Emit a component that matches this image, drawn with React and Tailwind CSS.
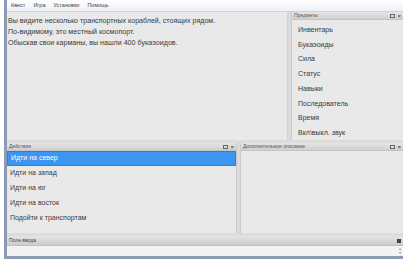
import React from "react";

function DockHeader({ title, float = true }) {
  return (
    <div className="h-[8px] flex items-center justify-between px-[2px] bg-gradient-to-b from-[#e6e6e6] to-[#d0d0d0] border-b border-[#c4c4c4] shrink-0">
      <span className="text-[5px] leading-none text-[#555]">{title}</span>
      <span className="flex items-center gap-[2px]">
        {float && <span className="w-[5px] h-[4px] border border-[#666] bg-[#ddd]" />}
        <span className="text-[6px] leading-none text-[#555] font-bold">×</span>
      </span>
    </div>
  );
}

export default function App() {
  const items = ["Инвентарь", "Букаэоиды", "Сила", "Статус", "Навыки", "Последователь", "Время", "Вкл\\выкл. звук"];
  const actions = ["Идти на запад", "Идти на юг", "Идти на восток", "Подойти к транспортам"];
  return (
    <div className="w-[403px] h-[262px] bg-white overflow-hidden" style={{ fontFamily: '"Liberation Sans", Arial, sans-serif' }}>
      <div className="ml-[4px] w-[399px] h-[259px] border-l-[3px] border-b-[3px] border-[#8a9bb3] bg-[#ececec] flex flex-col">
        <div className="h-[12px] shrink-0 bg-gradient-to-b from-[#ffffff] to-[#eef1f6] border-b border-[#c9d3e2] flex items-center gap-[8px] pl-[4px] text-[5.5px] text-[#444]">
          <span>Квест</span><span>Игра</span><span>Установки</span><span>Помощь</span>
        </div>
        <div className="h-[128px] shrink-0 flex">
          <div className="w-[281px] bg-[#e9e9e9] border-r border-[#d2d2d2] pt-[4px] pl-[1px] text-[7.1px] leading-[11px] text-[#3a3a3a]">
            <div>Вы видите несколько транспортных кораблей, стоящих рядом.</div>
            <div>По-видимому, это местный космопорт.</div>
            <div>Обыскав свои карманы, вы нашли 400 букаэоидов.</div>
          </div>
          <div className="w-[3px] bg-[#dadada]" />
          <div className="flex-1 flex flex-col bg-[#e9e9e9] border-l border-[#cbcbcb]">
            <DockHeader title="Предметы" />
            <div className="pl-[6px] pt-[3px] flex flex-col text-[7px] text-[#3a3a3a]">
              {items.map((t) => (
                <div key={t} className="h-[14.7px] flex items-center">{t}</div>
              ))}
            </div>
          </div>
        </div>
        <div className="h-[3px] shrink-0 bg-[#dcdcdc]" />
        <div className="h-[90px] shrink-0 flex">
          <div className="w-[230px] flex flex-col bg-[#e9e9e9] border-r border-[#cacaca]">
            <DockHeader title="Действия" />
            <div className="flex flex-col text-[7px] text-[#3a3a3a]">
              <div className="h-[15px] flex items-center pl-[3px] bg-[#3d95f2] text-white border border-[#2f7fd6]">Идти на север</div>
              {actions.map((t) => (
                <div key={t} className="h-[15px] flex items-center pl-[3px]">{t}</div>
              ))}
            </div>
          </div>
          <div className="w-[3px] bg-[#dadada]" />
          <div className="flex-1 flex flex-col bg-[#e9e9e9] border-l border-[#cacaca]">
            <DockHeader title="Дополнительное описание" />
          </div>
        </div>
        <div className="h-[3px] shrink-0 bg-[#dcdcdc]" />
        <div className="flex-1 flex flex-col">
          <div className="h-[10px] flex items-center justify-between px-[2px] bg-gradient-to-b from-[#e4e4e4] to-[#cccccc] border-b border-[#c0c0c0]">
            <span className="text-[5px] leading-none text-[#444]">Поле ввода</span>
            <span className="w-[4px] h-[4px] bg-[#444]" />
          </div>
          <div className="flex-1 bg-[#f3f3f3] flex justify-end pr-[2px] items-center">
            <span className="text-[4px] text-[#888] leading-none">▴<br />▾</span>
          </div>
        </div>
      </div>
    </div>
  );
}
